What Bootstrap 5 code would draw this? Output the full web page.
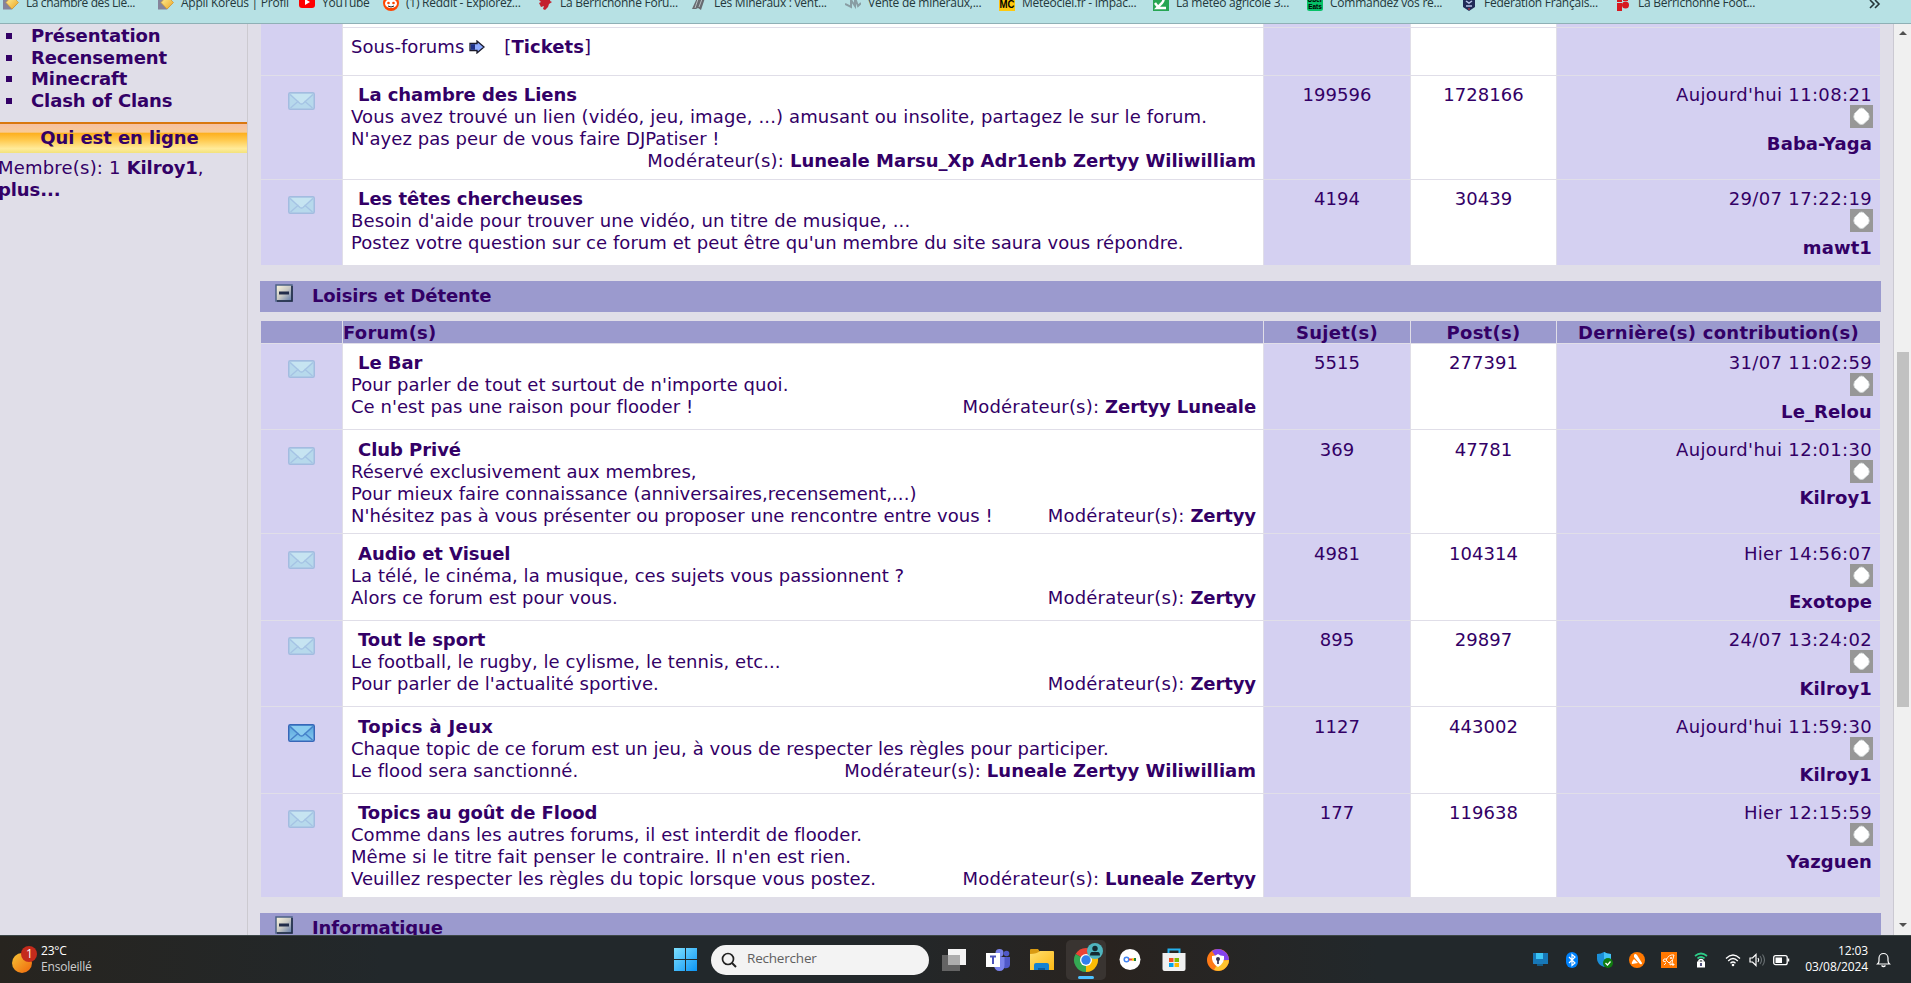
<!DOCTYPE html>
<html lang="fr">

<head>
  <meta charset="UTF-8">
  <meta name="viewport" content="width=device-width, initial-scale=1.0">
  <title>Forum Koreus</title>
  <link href="https://cdn.jsdelivr.net/npm/bootstrap@5.3.0/dist/css/bootstrap.min.css" rel="stylesheet">
  <style>
    body {
      background-color: #e0dee8;
      color: #306;
      font-family: "DejaVu Sans", Verdana, sans-serif;
      font-size: 18px;
      line-height: 22px;
    }

    svg {
      display: block;
      flex: none;
    }

    /* Bookmarks */
    .bookmarks {
      height: 24px;
      padding-left: 3px;
      background-color: #b7e1e4;
      border-bottom: 1px solid #8fb0b5;
      color: #24383b;
      font: 12px/16px "Open Sans", sans-serif;
    }

    .fav {
      width: 154px;
      gap: 7px;
      margin-top: -5px;
      white-space: nowrap;
      flex: none;
    }

    .fav span {
      letter-spacing: -.25px;
    }

    .fav:first-child span { letter-spacing: -.4px; }
    .fav:first-child { width: 155px; }
    .fav-b { width: 141px; }
    .fav-c { width: 84px; }

    /* Left column */
    .side-col {
      width: 248px;
      border-right: 1px solid #cccad0;
      letter-spacing: -.1px;
    }

    .side-menu {
      list-style: none;
      margin: 1px 0 0;
      padding: 0;
      line-height: 21.7px;
    }

    .side-menu li::before {
      content: "";
      display: inline-block;
      width: 6px;
      height: 6px;
      margin: 0 19px 3px 6px;
      background-color: #306;
    }

    .block-title {
      height: 31px;
      margin-top: 10px;
      padding-right: 24px;
      border-top: 2px solid #d9780f;
      background: linear-gradient(#f6c0a2 0, #f8cb98 28%, #fdb01f 32%, #ffc94d 55%, #ffeb9a 85%, #f3e27b 100%);
      line-height: 27px;
    }

    .online {
      margin: 4px 0 0 -2px;
    }

    .online-label {
      letter-spacing: .2px;
    }

    /* Forum tables */
    .forum-col {
      padding-left: 12px;
      width: 1645px;
    }

    .forum-table {
      width: 1621px;
      table-layout: fixed;
      border-collapse: separate;
      border-spacing: 1px;
    }

    .forum-table td {
      padding: 8px 8px 0;
      vertical-align: top;
      background-color: #d4d0f1;
      letter-spacing: .05px;
    }

    .forum-table td:nth-last-child(2),
    .forum-table td:nth-last-child(4) {
      background-color: #fff;
    }

    .forum-table td:nth-last-child(4) {
      padding-right: 7px;
    }

    .forum-table td:last-child {
      letter-spacing: .35px;
    }

    .forum-table td:last-child b {
      letter-spacing: .1px;
    }

    .forum-table th {
      height: 22px;
      padding: 1px 0 0;
      line-height: 21px;
      background-color: #9b9ace;
      letter-spacing: .25px;
    }

    .row-s td { height: 85px; }
    .row-m td { height: 86px; }
    .row-l td { height: 103px; }
    .row-down td { padding-top: 9px; }
    .row-down .who { margin-bottom: 4px; }

    .cut td {
      height: 3px;
      padding: 0 !important;
    }

    .sub-row td { height: 47px; }

    .c-icon { width: 81px; }
    .c-topic { width: 146px; }
    .c-post { width: 145px; }
    .c-last { width: 323px; }

    .top-table { margin-top: -1px; }
    .mid-table { margin-top: 8px; }

    .forum-name {
      padding-left: 7px;
      letter-spacing: -.05px;
    }

    .name-wide { letter-spacing: .35px; }
    .desc-wide { letter-spacing: .14px; }
    .mod { letter-spacing: .2px; }
    .mod b { letter-spacing: 0; }
    .mod-tight b { letter-spacing: -.1px; }

    .tick { margin-left: 18px; }

    .mail {
      margin: 8px auto 0;
    }

    .who {
      margin: -1px -1px 5px auto;
    }

    .cat-bar {
      width: 1621px;
      height: 31px;
      margin-top: 15px;
      background-color: #9b9ace;
    }

    .cat-btn { margin: 3px 19px 0 15px; }

    .cat-name {
      line-height: 29px;
      letter-spacing: -.12px;
    }

    /* Scrollbar */
    .scroll-col {
      width: 18px;
      background-color: #f0f0f0;
      border-left: 1px solid #cbc9d2;
    }

    .thumb {
      width: 12px;
      height: 355px;
      margin: 315px 0 auto;
      background-color: #c1c1c1;
    }

    /* Taskbar */
    .taskbar {
      height: 48px;
      border-top: 1px solid #3d4747;
      background: linear-gradient(90deg, #27241f, #22282b 20%, #22282b 45%, #29231f 58%, #22282b 72%, #22282b);
      color: #fff;
      font: 12px/16px "Open Sans", sans-serif;
    }

    .weather {
      width: 674px;
      padding-left: 12px;
    }

    .weather-txt {
      margin: -2px 0 0 3px;
      letter-spacing: -.2px;
    }

    .dim { color: #cfcfcf; }

    .search-box {
      width: 218px;
      height: 30px;
      margin: 0 13px 0 14px;
      padding-left: 10px;
      gap: 10px;
      border-radius: 15px;
      background-color: #f3f3f3;
      color: #606060;
      font-size: 13.5px;
      letter-spacing: -.2px;
    }

    .apps {
      gap: 20px;
    }

    .app-open {
      width: 40px;
      height: 40px;
      margin: 0 -8px;
      border-radius: 5px;
      background-color: #393431;
    }

    .tray {
      margin-left: auto;
      padding-right: 20px;
    }

    .t-bt { margin-left: 18px; }
    .t-sh { margin-left: 19px; }
    .t-av, .t-ro { margin-left: 16px; }
    .t-lo, .t-wi { margin-left: 17px; }
    .t-vo { margin-left: 8px; }
    .t-ba { margin-left: 7px; }
    .t-be { margin-left: 8px; }

    .clock {
      width: 78px;
      margin-top: -1px;
      letter-spacing: -.1px;
    }
  </style>
</head>

<body class="vh-100 overflow-hidden d-flex flex-column">

  <svg width="0" height="0" class="position-absolute">
    <defs>
      <linearGradient id="gMail" x2="0" y2="1"><stop stop-color="#58a5dc"/><stop offset="1" stop-color="#84c8ef"/></linearGradient>
      <linearGradient id="gBtn" x2="1" y2="1"><stop stop-color="#fff9df"/><stop offset=".5" stop-color="#c9c9c4"/><stop offset="1" stop-color="#5b76a8"/></linearGradient>
      <linearGradient id="gSun" x2="1" y2="1"><stop stop-color="#f6c436"/><stop offset="1" stop-color="#f0650a"/></linearGradient>
      <linearGradient id="gWin" x2="1" y2="1"><stop stop-color="#7ee0ff"/><stop offset="1" stop-color="#0c95f5"/></linearGradient>
      <linearGradient id="gFold" x2="1" y2="1"><stop stop-color="#ffdf6e"/><stop offset="1" stop-color="#fcb814"/></linearGradient>
      <linearGradient id="gGold" y2="1" x2="1"><stop stop-color="#fff6a0"/><stop offset="1" stop-color="#eda321"/></linearGradient>
    </defs>
    <symbol id="mail" viewBox="0 0 27 18">
      <rect x=".75" y=".75" width="25.5" height="16.5" rx="1.5" fill="#b7d9ec" stroke="#a3bce0" stroke-width="1.5"/>
      <path d="M3 2h21l-9 9.500q-1.500 1-3 0z" fill="#c6e4f1"/>
      <path d="M2 2.500l10 9q1.500 1 3 0l10-9M2.500 16l8-7M24.500 16l-8-7" fill="none" stroke="#a5c3e4" stroke-width="1.300"/>
    </symbol>
    <symbol id="mailNew" viewBox="0 0 27 18">
      <rect x=".75" y=".75" width="25.5" height="16.5" rx="1.5" fill="url(#gMail)" stroke="#3767b8" stroke-width="1.5"/>
      <path d="M3 2h21l-9 9.500q-1.500 1-3 0z" fill="#8bcdf0"/>
      <path d="M2 2.500l10 9q1.500 1 3 0l10-9M2.500 16l8-7M24.500 16l-8-7" fill="none" stroke="#4580c9" stroke-width="1.500"/>
    </symbol>
    <symbol id="who" viewBox="0 0 23 23">
      <rect width="23" height="23" fill="#979797"/>
      <path d="M9.500 3.500q2-1 4 0l5 5q1.500 3 0 6l-5 4.500q-2 1-4 0L4.500 14.500q-1.500-3 0-6z" fill="#fff" stroke="#cdd3d3" stroke-width=".8"/>
    </symbol>
    <symbol id="minus" viewBox="0 0 18 18">
      <rect x="1" y="1" width="16" height="16" fill="url(#gBtn)" stroke="#4d6285" stroke-width="1.500"/>
      <path d="M17 2v15H2" fill="none" stroke="#202c45" stroke-width="1.500"/>
      <path d="M4 9h10" stroke="#222d4a" stroke-width="3"/>
    </symbol>
    <symbol id="koreus" viewBox="0 0 16 16">
      <path d="M0 1h7l8 7-6 6.500H0z" fill="#85839a"/>
      <path d="M9 1l6.500 6.500L9 14 3 7.500z" fill="url(#gGold)" stroke="#d29a37" stroke-width=".8"/>
    </symbol>
  </svg>

  <div class="bookmarks d-flex flex-shrink-0">
    <div class="fav d-flex"><svg width="16" height="16"><use href="#koreus"/></svg><span>La chambre des Lie...</span></div>
    <div class="fav fav-b d-flex"><svg width="16" height="16"><use href="#koreus"/></svg><span>Appli Koreus | Profil</span></div>
    <div class="fav fav-c d-flex"><svg width="16" height="16"><rect y="1" width="16" height="12" rx="3" fill="#f00"/><path d="M6 4l5 3-5 3z" fill="#fff"/></svg><span>YouTube</span></div>
    <div class="fav d-flex"><svg width="16" height="16"><circle cx="8" cy="8" r="8" fill="#ff4500"/><ellipse cx="8" cy="8.500" rx="6" ry="4.500" fill="#fff"/><circle cx="5.500" cy="8" r="1.300" fill="#ff4500"/><circle cx="10.500" cy="8" r="1.300" fill="#ff4500"/><path d="M5 11q3 2 6 0" stroke="#222" fill="none"/></svg><span>(1) Reddit - Explorez...</span></div>
    <div class="fav d-flex"><svg width="16" height="16"><path d="M1 4l4 1 2-3 3 2 4-2-1 4 2 1-3 2-1 3-3 3-2-1 1-3-3 1-2-4 2-1z" fill="#c3202f"/></svg><span>La Berrichonne Foru...</span></div>
    <div class="fav d-flex"><svg width="16" height="16"><path d="M1 14l5-11 3 2 3-4 2 2-4 12-3-2-2 1z" fill="#676b70"/><path d="M7 4l-3 9M11 4l-3 8" stroke="#b9bfc2"/></svg><span>Les Minéraux : vent...</span></div>
    <div class="fav d-flex"><svg width="16" height="16"><path d="M0 9l6 3V5l4 6V3l3 8 3-3" fill="none" stroke="#899da3" stroke-width="2"/></svg><span>Vente de minéraux,...</span></div>
    <div class="fav d-flex"><svg width="16" height="16"><rect width="16" height="16" fill="#ffc90e"/><text x="8" y="12.500" font-family="Liberation Sans" font-weight="bold" font-size="11" text-anchor="middle" textLength="15" lengthAdjust="spacingAndGlyphs">MC</text></svg><span>Météociel.fr - Impac...</span></div>
    <div class="fav d-flex"><svg width="16" height="16"><rect width="16" height="16" fill="#27a553"/><path d="M7 0q6 3 2 8l-5 5h9M2 8l3 4" fill="none" stroke="#fff" stroke-width="2.500"/></svg><span>La météo agricole 3...</span></div>
    <div class="fav d-flex"><svg width="16" height="16"><rect width="16" height="16" rx="2.500" fill="#06c167"/><text x="8" y="7" font-family="Liberation Sans" font-weight="bold" font-size="6.500" text-anchor="middle">Uber</text><text x="8" y="13.500" font-family="Liberation Sans" font-weight="bold" font-size="6.500" text-anchor="middle">Eats</text></svg><span>Commandez vos re...</span></div>
    <div class="fav d-flex"><svg width="16" height="16"><path d="M2 0h12v12l-6 4-6-4z" fill="#212b58"/><path d="M5 6l3 2 3-2M5 11h6" stroke="#b8c4e8" fill="none" stroke-width="1.500"/><path d="M8 13v2" stroke="#d33"/></svg><span>Fédération Français...</span></div>
    <div class="fav d-flex"><svg width="16" height="16"><path d="M2 0h5v7H2zM8 0h5v6H8zM2 8h5v8H2z" fill="#d71920"/><circle cx="10.500" cy="10" r="3.500" fill="#d71920"/></svg><span>La Berrichonne Foot...</span></div>
    <svg class="ms-auto scroll-more" width="44" height="14"><path d="M3 0l4 4-4 4M8 0l4 4-4 4" fill="none" stroke="#253538" stroke-width="1.600"/></svg>
  </div>

  <div class="d-flex flex-grow-1 overflow-hidden">

    <div class="side-col flex-shrink-0">
      <ul class="side-menu fw-bold">
        <li>Présentation</li>
        <li>Recensement</li>
        <li>Minecraft</li>
        <li>Clash of Clans</li>
      </ul>
      <div class="block-title text-center fw-bold ps-3">Qui est en ligne</div>
      <div class="online"><span class="online-label">Membre(s): 1 </span><b>Kilroy1</b>,<br><b>plus...</b></div>
    </div>

    <div class="forum-col flex-shrink-0">
      <table class="forum-table top-table">
        <colgroup><col class="c-icon"><col><col class="c-topic"><col class="c-post"><col class="c-last"></colgroup>
        <tr class="cut">
          <td rowspan="2"></td><td></td><td></td><td></td><td></td>
        </tr>
        <tr class="sub-row">
          <td>
            <div class="d-flex align-items-center">Sous-forums
              <svg width="28" height="14"><path d="M8 3.500h5V1l7 6-7 6v-2.500H6v-7z" fill="#8dabff" stroke="#1b1b2b" stroke-width="1.300"/><path d="M7 4.200h4v5.600H7z" fill="#1d2f85"/></svg>
              <span class="tick ms-2 ps-1">[<b>Tickets</b>]</span></div>
          </td>
          <td></td><td></td><td></td>
        </tr>
        <tr class="row-l">
          <td><svg class="mail" width="27" height="18"><use href="#mail"/></svg></td>
          <td><b class="forum-name">La chambre des Liens</b><br><span class="desc-wide">Vous avez trouvé un lien (vidéo, jeu, image, ...) amusant ou insolite, partagez le sur le forum.</span><br>N'ayez pas peur de vous faire DJPatiser !
            <div class="text-end mod">Modérateur(s): <b>Luneale Marsu_Xp Adr1enb Zertyy Wiliwilliam</b></div></td>
          <td class="text-center">199596</td>
          <td class="text-center">1728166</td>
          <td class="text-end">Aujourd'hui 11:08:21<svg class="who" width="23" height="23"><use href="#who"/></svg><b>Baba-Yaga</b></td>
        </tr>
        <tr class="row-s">
          <td><svg class="mail" width="27" height="18"><use href="#mail"/></svg></td>
          <td><b class="forum-name">Les têtes chercheuses</b><br><span class="desc-wide">Besoin d'aide pour trouver une vidéo, un titre de musique, ...</span><br>Postez votre question sur ce forum et peut être qu'un membre du site saura vous répondre.</td>
          <td class="text-center">4194</td>
          <td class="text-center">30439</td>
          <td class="text-end">29/07 17:22:19<svg class="who" width="23" height="23"><use href="#who"/></svg><b>mawt1</b></td>
        </tr>
      </table>

      <div class="cat-bar d-flex">
        <svg class="cat-btn" width="18" height="18"><use href="#minus"/></svg>
        <b class="cat-name">Loisirs et Détente</b>
      </div>

      <table class="forum-table mid-table">
        <colgroup><col class="c-icon"><col><col class="c-topic"><col class="c-post"><col class="c-last"></colgroup>
        <tr>
          <th></th>
          <th>Forum(s)</th>
          <th class="text-center">Sujet(s)</th>
          <th class="text-center">Post(s)</th>
          <th class="text-center">Dernière(s) contribution(s)</th>
        </tr>
        <tr class="row-s">
          <td><svg class="mail" width="27" height="18"><use href="#mail"/></svg></td>
          <td><b class="forum-name">Le Bar</b><br>Pour parler de tout et surtout de n'importe quoi.
            <div class="d-flex justify-content-between"><span>Ce n'est pas une raison pour flooder !</span><span class="mod mod-tight">Modérateur(s): <b>Zertyy Luneale</b></span></div></td>
          <td class="text-center">5515</td>
          <td class="text-center">277391</td>
          <td class="text-end">31/07 11:02:59<svg class="who" width="23" height="23"><use href="#who"/></svg><b>Le_Relou</b></td>
        </tr>
        <tr class="row-l row-down">
          <td><svg class="mail" width="27" height="18"><use href="#mail"/></svg></td>
          <td><b class="forum-name">Club Privé</b><br>Réservé exclusivement aux membres,<br>Pour mieux faire connaissance (anniversaires,recensement,...)
            <div class="d-flex justify-content-between"><span>N'hésitez pas à vous présenter ou proposer une rencontre entre vous !</span><span class="mod mod-tight">Modérateur(s): <b>Zertyy</b></span></div></td>
          <td class="text-center">369</td>
          <td class="text-center">47781</td>
          <td class="text-end">Aujourd'hui 12:01:30<svg class="who" width="23" height="23"><use href="#who"/></svg><b>Kilroy1</b></td>
        </tr>
        <tr class="row-m row-down">
          <td><svg class="mail" width="27" height="18"><use href="#mail"/></svg></td>
          <td><b class="forum-name">Audio et Visuel</b><br>La télé, le cinéma, la musique, ces sujets vous passionnent ?
            <div class="d-flex justify-content-between"><span>Alors ce forum est pour vous.</span><span class="mod mod-tight">Modérateur(s): <b>Zertyy</b></span></div></td>
          <td class="text-center">4981</td>
          <td class="text-center">104314</td>
          <td class="text-end">Hier 14:56:07<svg class="who" width="23" height="23"><use href="#who"/></svg><b>Exotope</b></td>
        </tr>
        <tr class="row-s">
          <td><svg class="mail" width="27" height="18"><use href="#mail"/></svg></td>
          <td><b class="forum-name">Tout le sport</b><br>Le football, le rugby, le cylisme, le tennis, etc...
            <div class="d-flex justify-content-between"><span>Pour parler de l'actualité sportive.</span><span class="mod mod-tight">Modérateur(s): <b>Zertyy</b></span></div></td>
          <td class="text-center">895</td>
          <td class="text-center">29897</td>
          <td class="text-end">24/07 13:24:02<svg class="who" width="23" height="23"><use href="#who"/></svg><b>Kilroy1</b></td>
        </tr>
        <tr class="row-m row-down">
          <td><svg class="mail" width="27" height="18"><use href="#mailNew"/></svg></td>
          <td><b class="forum-name name-wide">Topics à Jeux</b><br>Chaque topic de ce forum est un jeu, à vous de respecter les règles pour participer.
            <div class="d-flex justify-content-between"><span>Le flood sera sanctionné.</span><span class="mod">Modérateur(s): <b>Luneale Zertyy Wiliwilliam</b></span></div></td>
          <td class="text-center">1127</td>
          <td class="text-center">443002</td>
          <td class="text-end">Aujourd'hui 11:59:30<svg class="who" width="23" height="23"><use href="#who"/></svg><b>Kilroy1</b></td>
        </tr>
        <tr class="row-l">
          <td><svg class="mail" width="27" height="18"><use href="#mail"/></svg></td>
          <td><b class="forum-name">Topics au goût de Flood</b><br>Comme dans les autres forums, il est interdit de flooder.<br>Même si le titre fait penser le contraire. Il n'en est rien.
            <div class="d-flex justify-content-between"><span>Veuillez respecter les règles du topic lorsque vous postez.</span><span class="mod mod-tight">Modérateur(s): <b>Luneale Zertyy</b></span></div></td>
          <td class="text-center">177</td>
          <td class="text-center">119638</td>
          <td class="text-end">Hier 12:15:59<svg class="who" width="23" height="23"><use href="#who"/></svg><b>Yazguen</b></td>
        </tr>
      </table>

      <div class="cat-bar d-flex">
        <svg class="cat-btn" width="18" height="18"><use href="#minus"/></svg>
        <b class="cat-name">Informatique</b>
      </div>
    </div>

    <div class="scroll-col d-flex flex-column align-items-center">
      <svg width="8" height="13"><path d="M4 7l4 4H0z" fill="#505050"/></svg>
      <div class="thumb"></div>
      <svg width="8" height="12"><path d="M0 0h8L4 4z" fill="#505050"/></svg>
    </div>
  </div>

  <div class="taskbar d-flex align-items-center flex-shrink-0">
    <div class="weather d-flex align-items-center">
      <svg width="26" height="30"><circle cx="10" cy="18" r="10" fill="url(#gSun)"/><circle cx="17" cy="9" r="8" fill="#c42b1c"/><text x="17.500" y="13" font-size="12" fill="#fff" text-anchor="middle">1</text></svg>
      <div class="weather-txt">23°C<br><span class="dim">Ensoleillé</span></div>
    </div>

    <svg width="23" height="23"><path d="M0 0h11v11H0zM12 0h11v11H12zM0 12h11v11H0zM12 12h11v11H12z" fill="url(#gWin)"/></svg>

    <div class="search-box d-flex align-items-center">
      <svg width="16" height="16"><circle cx="7" cy="7" r="5.500" fill="none" stroke="#222" stroke-width="1.700"/><path d="M11 11l4 4" stroke="#222" stroke-width="2"/></svg>
      <span class="pb-1">Rechercher</span>
    </div>

    <div class="apps d-flex align-items-center">
      <svg width="24" height="24"><rect x="6" y="1" width="18" height="16" fill="#f4f4f4"/><rect y="7" width="18" height="16" fill="#646464"/><path d="M6 7h12v10H6z" fill="#adadad"/></svg>
      <svg width="24" height="24"><circle cx="13.500" cy="5" r="4" fill="#7b83eb"/><circle cx="20.500" cy="5.500" r="2.800" fill="#5059c9"/><path d="M17 9h7v8q-1 4-6 3z" fill="#5059c9"/><path d="M8 9h10.500v8q0 6-5 6t-5.500-6z" fill="#7b83eb"/><rect y="5" width="14" height="14" fill="#fff"/><path d="M4 8.500h6M7 8.500V16" stroke="#4b53bc" stroke-width="2"/></svg>
      <svg width="24" height="24"><path d="M0 2q0-1 1-1h7l2 3-2 3H0z" fill="#d99a12"/><path d="M0 6q7 0 10-3h13q1 0 1 1v18H0z" fill="url(#gFold)"/><path d="M4 22v-5q0-2 2-2h11q2 0 2 2v5z" fill="#1482d2"/><path d="M8 22v-2h7v2z" fill="#0b5c9e"/></svg>
      <div class="app-open">
        <svg width="40" height="40">
          <path d="M20 20L9.600 14A12 12 0 0 1 30.400 14z" fill="#ea4335"/><path d="M20 20L9.600 14A12 12 0 0 0 20 32l6-9z" fill="#34a853"/><path d="M20 20l10.400-6A12 12 0 0 1 20 32z" fill="#fbbc05"/><circle cx="20" cy="20" r="6" fill="#fff"/><circle cx="20" cy="20" r="4.700" fill="#2f80ed"/>
          <circle cx="29" cy="11" r="8" fill="#4fb5bf"/><circle cx="29" cy="8.500" r="2.700" fill="#152a30"/><path d="M24 15.500q0-3.500 2-3.500h6q2 0 2 3.500z" fill="#152a30"/><rect x="12" y="36" width="16" height="3" rx="1.500" fill="#4cc2ff"/>
        </svg>
      </div>
      <svg width="24" height="24"><circle cx="12" cy="11.500" r="10.500" fill="#fff"/><circle cx="8.500" cy="11.500" r="2.300" fill="none" stroke="#4285f4" stroke-width="1.500"/><path d="M11 11.500h3" stroke="#ea4335" stroke-width="2"/><path d="M14 11.500h2" stroke="#fbbc05" stroke-width="2.500"/><path d="M16 11.500h2" stroke="#188038" stroke-width="3"/></svg>
      <svg width="24" height="24"><path d="M6.500 6V1.500h11V6" fill="none" stroke="#24b1ed" stroke-width="2"/><path d="M.5 5h23v16q0 2-2 2h-19q-2 0-2-2z" fill="#f0f0f0"/><path d="M7 10h4.500v4H7z" fill="#f25022"/><path d="M12.500 10H17v4h-4.500z" fill="#7fba00"/><path d="M7 15h4.500v4H7z" fill="#00a4ef"/><path d="M12.500 15H17v4h-4.500z" fill="#ffb900"/></svg>
      <svg width="24" height="24"><circle cx="12" cy="12" r="11" fill="#ff7a16"/><path d="M6 3a11 11 0 0 1 17 9H12z" fill="#8443ed"/><path d="M23 12a11 11 0 0 1-15 10l5-9z" fill="#ffc42e"/><path d="M6 8q4 0 6-2 2 2 6 2 1 7-6 11-7-4-6-11z" fill="#fff"/><circle cx="12" cy="11" r="2" fill="#343150"/><path d="M12 11v5" stroke="#343150" stroke-width="1.700"/></svg>
    </div>

    <div class="tray d-flex align-items-center">
      <svg class="t-pc" width="15" height="16"><rect y="1" width="15" height="11" fill="#1778b8"/><path d="M3 1h7v6H3z" fill="#3bc4f4"/><path d="M4 12h6v2H4z" fill="#155a86"/></svg>
      <svg class="t-bt" width="12" height="16"><rect width="12" height="16" rx="6" fill="#0082fc"/><path d="M3 5l6 6-3 2.500v-11L9 5l-6 6" fill="none" stroke="#fff" stroke-width="1.200"/></svg>
      <svg class="t-sh" width="16" height="16"><path d="M0 2q4 0 7-2 3 2 7 2v5q0 5-7 8-7-3-7-8z" fill="#1b8fd8"/><path d="M7 0q3 2 7 2v5H7z" fill="#42c2f5"/><circle cx="11" cy="11" r="5" fill="#107c10"/><path d="M8.500 11l2 2 3-3.500" fill="none" stroke="#fff" stroke-width="1.300"/></svg>
      <svg class="t-av" width="16" height="16"><circle cx="8" cy="8" r="8" fill="#ff7800"/><path d="M5 3q1-2 3 0l5 8q0 2-2 1L5 5zM5 7l4 4-6 1q-1-1 2-5z" fill="#fff"/></svg>
      <svg class="t-ro" width="16" height="16"><rect width="16" height="16" fill="#ff7800"/><path d="M5 8q3-6 8-5 0 5-5 8zM6 7H3L2 9l3 1M9 10v3l2-1 .5-4M3 13l2-2M10.500 12.500h3M12 11v3" fill="none" stroke="#fff" stroke-width=".9"/><circle cx="10" cy="6" r="1" fill="#fff"/></svg>
      <svg class="t-lo" width="14" height="16"><path d="M1 4q6-5 12 0M3.500 6.500q3.500-3 7 0" fill="none" stroke="#2ecc87" stroke-width="1.700"/><path d="M5 10V8.500q2-2 4 0V10" fill="none" stroke="#fff" stroke-width="1.500"/><rect x="3" y="9.500" width="8" height="6" fill="#fff"/><path d="M7 11v3" stroke="#171852" stroke-width="1.500"/></svg>
      <svg class="t-wi" width="16" height="14"><path d="M1 5.500q7-7 14 0M3.200 8q4.800-5 9.600 0M5.500 10.300q2.500-2.500 5 0" fill="none" stroke="#fff" stroke-width="1.300"/><circle cx="8" cy="12" r="1.300" fill="#fff"/></svg>
      <svg class="t-vo" width="17" height="14"><path d="M1 5h2.500L7 1.500v11L3.500 9H1z" fill="none" stroke="#fff" stroke-width="1.200"/><path d="M9 5q1.500 2 0 4" fill="none" stroke="#fff" stroke-width="1.200"/><path d="M11 3q3 4 0 8M13.500 1.500q4 5.500 0 11" fill="none" stroke="#697073" stroke-width="1.100"/></svg>
      <svg class="t-ba" width="17" height="12"><rect x=".7" y="1.700" width="13.500" height="9" rx="2" fill="none" stroke="#fff" stroke-width="1.300"/><path d="M2.500 3.500h6.500v5.500H2.500z" fill="#fff"/><path d="M15.500 4.500v3" stroke="#fff" stroke-width="1.500"/></svg>
      <div class="clock text-end">12:03<br>03/08/2024</div>
      <svg class="t-be" width="15" height="16"><path d="M2 11.500q1-1 1-3V6a4.500 4.500 0 0 1 9 0v2.500q0 2 1.500 3.500H1.500zM5.500 13.500q2 2 4 0" fill="none" stroke="#fff" stroke-width="1.200"/></svg>
    </div>
  </div>

  <script src="https://cdn.jsdelivr.net/npm/bootstrap@5.3.0/dist/js/bootstrap.bundle.min.js"></script>
</body>

</html>
